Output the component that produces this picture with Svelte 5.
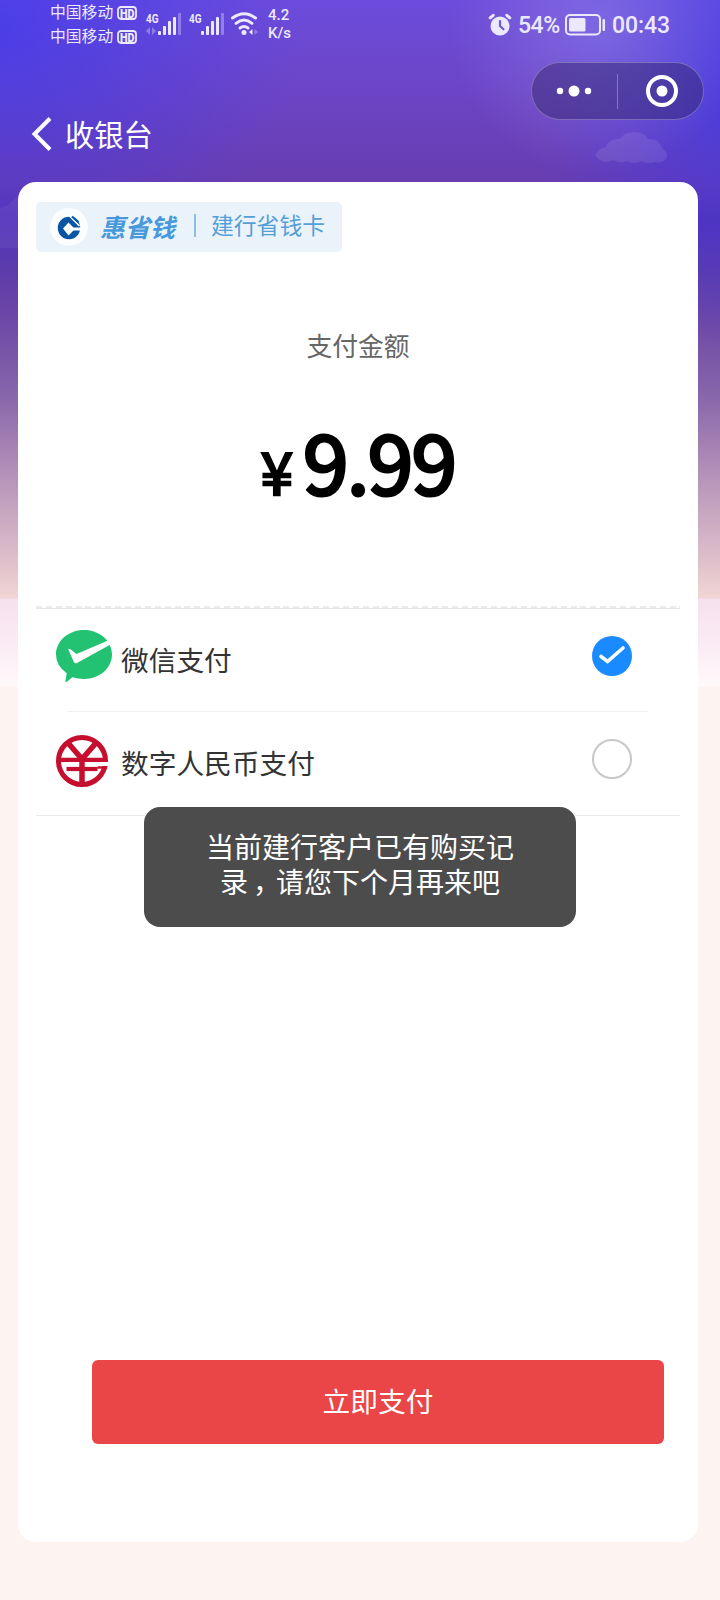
<script lang="ts">
	interface PayMethod {
		id: string;
		name: string;
	}

	const carriers = ['中国移动', '中国移动'];

	const methods: PayMethod[] = [
		{ id: 'wechat', name: '微信支付' },
		{ id: 'ecny', name: '数字人民币支付' }
	];

	let selected = $state('wechat');
</script>

{#snippet signal(arrows: boolean)}
	<svg class="signal" width="36" height="24" viewBox="0 0 36 24">
		<text x="0" y="10.500" font-size="13" font-weight="700" textLength="12.500" lengthAdjust="spacingAndGlyphs">4G</text>
		{#if arrows}
			<path d="M0 19l4-4v8zM10 19l-4-4v8z" opacity=".35" />
		{/if}
		<rect x="12" y="19" width="3" height="4" rx="1" />
		<rect x="17" y="14" width="3" height="9" rx="1" />
		<rect x="22" y="9" width="3" height="14" rx="1" />
		<rect x="27" y="5" width="3" height="18" rx="1" />
		<rect x="32" y="1" width="3" height="22" rx="1" opacity=".35" />
	</svg>
{/snippet}

<div class="page">
	<svg class="scenery" width="720" height="320" viewBox="0 0 720 320">
		<path d="M595 155q4-7 11-8 3-9 14-8 4-7 15-7 10 1 13 7 11-1 14 9 6 4 5 9-3 7-12 5-7 3-13-1-8 4-15 0-7 3-13-1-13 5-19-5z" fill="#fff" opacity=".09" />
		<path d="M0 208q8-1 14-9 8-5 14-3v52H0z" fill="#fff" opacity=".06" />
	</svg>

	<header>
		<div class="status-bar">
			<div class="carriers">
				{#each carriers as carrier}
					<div class="carrier">
						<span>{carrier}</span>
						<svg width="20" height="14" viewBox="0 0 20 14">
							<rect x="1" y="1" width="18" height="12" rx="3" fill="none" stroke="#ece8ff" stroke-width="1.8" />
							<text x="3" y="11.600" font-size="12.500" font-weight="900" textLength="14.500" lengthAdjust="spacingAndGlyphs">HD</text>
						</svg>
					</div>
				{/each}
			</div>
			{@render signal(true)}
			{@render signal(false)}
			<svg class="wifi" width="28" height="24" viewBox="0 0 28 24">
				<g fill="none" stroke="#ece8ff" stroke-width="3" stroke-linecap="round">
					<path d="M1.500 6q11.500-8.500 23 0" />
					<path d="M5 11.300q8-6.500 16 0" />
					<path d="M9 16q4-3 8 0" />
				</g>
				<circle cx="13" cy="20.500" r="2.500" />
				<path d="M18 20l3.500-3v6z" />
				<path d="M27 20l-3.500-3v6z" opacity=".35" />
			</svg>
			<div class="speed">
				<span>4.2</span>
				<span>K/s</span>
			</div>
			<div class="status-right">
				<svg width="24" height="24" viewBox="0 0 24 24">
					<circle cx="12" cy="13" r="9.500" />
					<path d="M2.200 4.800l3-2.500M21.800 4.800l-3-2.500" stroke="#ece8ff" stroke-width="3" stroke-linecap="round" />
					<path d="M12 8v5l3.500 3.300" fill="none" stroke="#7156d6" stroke-width="2.200" stroke-linecap="round" />
				</svg>
				<span class="percent">54%</span>
				<svg class="battery" width="42" height="22" viewBox="0 0 42 22">
					<rect x="1" y="1" width="34" height="19.500" rx="4" fill="none" stroke="#ece8ff" stroke-width="2" />
					<rect x="4" y="4" width="16.500" height="13.500" rx="1.500" />
					<rect x="37.500" y="5" width="2.500" height="12" rx="1" />
				</svg>
				<span class="time">00:43</span>
			</div>
		</div>

		<div class="capsule">
			<svg width="36" height="12" viewBox="0 0 36 12">
				<circle cx="4" cy="6" r="3.200" />
				<circle cx="18" cy="6" r="5.500" />
				<circle cx="32" cy="6" r="3.200" />
			</svg>
			<i></i>
			<svg width="32" height="32" viewBox="0 0 32 32">
				<circle cx="16" cy="16" r="14" fill="none" stroke="#fff" stroke-width="4" />
				<circle cx="16" cy="16" r="5.500" />
			</svg>
		</div>

		<div class="nav">
			<svg width="22" height="36" viewBox="0 0 22 36">
				<path d="M19 2.500L3.500 18 19 33.500" fill="none" stroke="#fff" stroke-width="4" />
			</svg>
			<h1>收银台</h1>
		</div>
	</header>

	<main class="card">
		<div class="merchant">
			<span class="logo">
				<svg width="24" height="26" viewBox="0 0 24 26">
					<circle cx="12" cy="14" r="11.200" fill="#0755a5" />
					<path d="M11.500 8.500l5 5H24v3h-7.500l-5 5L6 14.500z" fill="#fff" />
					<path d="M12 1.500l10.500 10.500" stroke="#fff" stroke-width="1.500" />
					<path d="M15 2.500l6.500 5.500" stroke="#0755a5" stroke-width="2.200" />
				</svg>
			</span>
			<strong>惠省钱</strong>
			<i></i>
			<span class="merchant-name">建行省钱卡</span>
		</div>

		<section class="amount">
			<p>支付金额</p>
			<div class="price"><span class="yen">¥</span><span class="value">9.99</span></div>
		</section>

		<div class="dashes"></div>
		<div class="methods">
			{#each methods as method (method.id)}
				<button class="method" onclick={() => (selected = method.id)}>
					{#if method.id === 'wechat'}
						<svg class="brand" width="56" height="52" viewBox="0 0 56 52">
							<path d="M28 0C43.500 0 56 10.800 56 24.500S43.500 49 28 49q-6 0-11.500-1.800L10.500 52q-1.500.5-1-1.500l1.200-7.200Q0 35.500 0 24.500C0 10.800 12.500 0 28 0z" fill="#23c172" />
							<path d="M12.500 20q-.5-2 1.500-1l6.500 5L52 10.500l3 3.700L21 33q-2 1-3-.8z" fill="#fff" />
						</svg>
					{:else}
						<svg class="brand" width="56" height="52" viewBox="0 0 56 52">
							<g fill="none" stroke="#c60f2e">
								<circle cx="27" cy="26" r="23.500" stroke-width="5" />
								<path d="M13.500 8.500L27 24 40.500 8.500M27 22v28" stroke-width="5.500" />
								<path d="M4 24.800h48" stroke-width="4.200" />
								<path d="M11.500 34h31" stroke-width="4.200" />
							</g>
							<path d="M44 29h10" stroke="#fff" stroke-width="4" />
							<path d="M42.500 32.500h9" stroke="#c60f2e" stroke-width="2.500" />
						</svg>
					{/if}
					<span class="method-name">{method.name}</span>
					<svg class="radio" width="40" height="40" viewBox="0 0 40 40">
						{#if selected === method.id}
							<circle cx="20" cy="20" r="20" fill="#198aff" />
							<path d="M9 20.500l6.500 5L31 12" fill="none" stroke="#fff" stroke-width="3.600" stroke-linecap="round" stroke-linejoin="miter" />
						{:else}
							<circle cx="20" cy="20" r="19" fill="#fff" stroke="#c8c8c8" stroke-width="2" />
						{/if}
					</svg>
				</button>
			{/each}
		</div>

		<button class="submit">立即支付</button>
	</main>

	<div class="toast">
		<div>当前建行客户已有购买记</div>
		<div>录<span class="comma">，</span>请您下个月再来吧</div>
	</div>
</div>

<style>
	:global(body) {
		margin: 0;
	}

	.page {
		position: relative;
		box-sizing: border-box;
		width: 720px;
		height: 1600px;
		overflow: hidden;
		padding: 0 22px 0 18px;
		font-family: 'Noto Sans CJK SC', sans-serif;
		background:
			radial-gradient(ellipse 150px 150px at 600px 25px, rgba(150, 135, 232, 0.5), transparent),
			radial-gradient(ellipse 300px 250px at 0 30px, rgba(58, 56, 240, 0.65), transparent),
			radial-gradient(ellipse 200px 260px at 740px 90px, rgba(58, 56, 235, 0.65), transparent),
			linear-gradient(
				180deg,
				#6c4cdc 0,
				#6c45c6 90px,
				#683db0 182px,
				#5732b2 220px,
				#5d3caa 270px,
				#6e48a6 320px,
				#8a68ab 400px,
				#b795ba 480px,
				#dfbfca 560px,
				#f1d6d5 598px,
				#f5e0ee 599px,
				#faeaf3 640px,
				#fff9fb 686px,
				#fdf4f1 687px
			);
	}

	.scenery {
		position: absolute;
		top: 0;
		left: 0;
	}

	header {
		position: relative;
		height: 182px;
	}

	svg {
		flex: none;
		display: block;
	}

	.status-bar {
		display: flex;
		align-items: center;
		height: 50px;
		padding-left: 32px;
		color: #ece8ff;
		fill: #ece8ff;
		font-family: Roboto, 'Noto Sans CJK SC', sans-serif;
	}

	.carriers {
		width: 96px;
	}

	.carrier {
		display: flex;
		align-items: center;
		gap: 4px;
		height: 24px;
		font-size: 15.800px;
		line-height: 24px;
	}

	.signal {
		margin: -2px 7px 0 0;
	}

	.wifi {
		margin: -2px 9px 0 -1px;
	}

	.speed {
		display: flex;
		flex-direction: column;
		margin-top: -2px;
		font-size: 15px;
		font-weight: 500;
		line-height: 18px;
	}

	.status-right {
		display: flex;
		align-items: center;
		margin: 0 27px 0 auto;
		font-size: 23px;
		font-weight: 500;
	}

	.percent {
		width: 42px;
		margin: 0 5px 0 6px;
		letter-spacing: -0.5px;
	}

	.time {
		width: 59px;
		margin-left: 5px;
		letter-spacing: -0.1px;
	}

	.capsule {
		position: absolute;
		top: 62px;
		left: 513px;
		display: flex;
		align-items: center;
		box-sizing: border-box;
		width: 173px;
		height: 58px;
		padding-left: 24px;
		border: 1px solid rgba(255, 255, 255, 0.25);
		border-radius: 29px;
		background: rgba(40, 30, 90, 0.4);
		fill: #fff;
	}

	.capsule i {
		width: 1px;
		height: 35px;
		margin: 0 28px 0 25px;
		background: rgba(255, 255, 255, 0.3);
	}

	.nav {
		display: flex;
		align-items: center;
		gap: 12px;
		height: 74px;
		padding: 47px 0 0 13px;
	}

	h1 {
		margin: -2px 0 0;
		color: #fff;
		font-size: 29.300px;
		font-weight: 400;
		line-height: 40px;
	}

	.card {
		position: relative;
		box-sizing: border-box;
		height: 1360px;
		padding: 20px 18px 0;
		border-radius: 18px;
		background: #fff;
	}

	.merchant {
		display: flex;
		align-items: center;
		box-sizing: border-box;
		width: 306px;
		height: 50px;
		padding-left: 14px;
		border-radius: 5px;
		background: #ebf3fa;
		color: #559fd8;
	}

	.logo {
		display: flex;
		align-items: center;
		justify-content: center;
		width: 38px;
		height: 38px;
		border-radius: 50%;
		background: #fbfdff;
	}

	.merchant strong {
		width: 78px;
		margin: -2px 0 0 12px;
		color: #4799dc;
		font-size: 25px;
		font-style: italic;
	}

	.merchant i {
		width: 2px;
		height: 23px;
		margin: 0 15px 4px 16px;
		background: #8dbfe5;
	}

	.merchant-name {
		padding-bottom: 5px;
		font-size: 22.800px;
	}

	.amount {
		height: 354px;
		text-align: center;
	}

	.amount p {
		margin: 0;
		padding-top: 73px;
		color: #666;
		font-size: 25.800px;
		line-height: 40px;
	}

	.price {
		display: flex;
		align-items: baseline;
		justify-content: center;
		margin-top: 37px;
		color: #000;
		line-height: 116px;
	}

	.yen {
		margin-right: 10px;
		font-size: 58px;
		-webkit-text-stroke: 2.500px #000;
	}

	.value {
		font-size: 82px;
		letter-spacing: -1.800px;
		-webkit-text-stroke: 3.200px #000;
	}

	.dashes {
		height: 2px;
		background: repeating-linear-gradient(90deg, #ebebeb 0 6px, transparent 6px 9.900px);
	}

	.methods {
		border-top: 1px solid #e4e4e4;
		border-bottom: 1px solid #ebebeb;
	}

	.method {
		position: relative;
		display: flex;
		align-items: center;
		width: 100%;
		height: 102px;
		padding: 0 48px 0 20px;
		border: 0;
		background: none;
		font-family: inherit;
		text-align: left;
	}

	.method + .method {
		height: 104px;
	}

	.method + .method::before {
		content: '';
		position: absolute;
		top: 0;
		right: 32px;
		left: 32px;
		height: 1px;
		background: #efefef;
	}

	.brand {
		margin: 0 9px 8px 0;
	}

	.method + .method .brand {
		margin: 0 10px 5px -1px;
	}

	.method-name {
		flex: 1;
		margin-top: -3px;
		color: #333;
		font-size: 27.700px;
	}

	.radio {
		margin-bottom: 8px;
	}

	.submit {
		display: block;
		width: 572px;
		height: 84px;
		margin: 544px 0 0 56px;
		padding: 0 0 4px;
		border: 0;
		border-radius: 6px;
		background: #ea4647;
		color: #fff;
		font-family: inherit;
		font-size: 27.700px;
	}

	.toast {
		position: absolute;
		top: 807px;
		left: 144px;
		box-sizing: border-box;
		width: 432px;
		height: 120px;
		padding-top: 22px;
		border-radius: 16px;
		background: #4c4c4c;
		color: #fff;
		font-size: 28px;
		line-height: 35px;
		text-align: center;
	}

	.toast div {
		height: 35px;
	}

	.comma {
		position: relative;
		left: 5px;
	}
</style>
